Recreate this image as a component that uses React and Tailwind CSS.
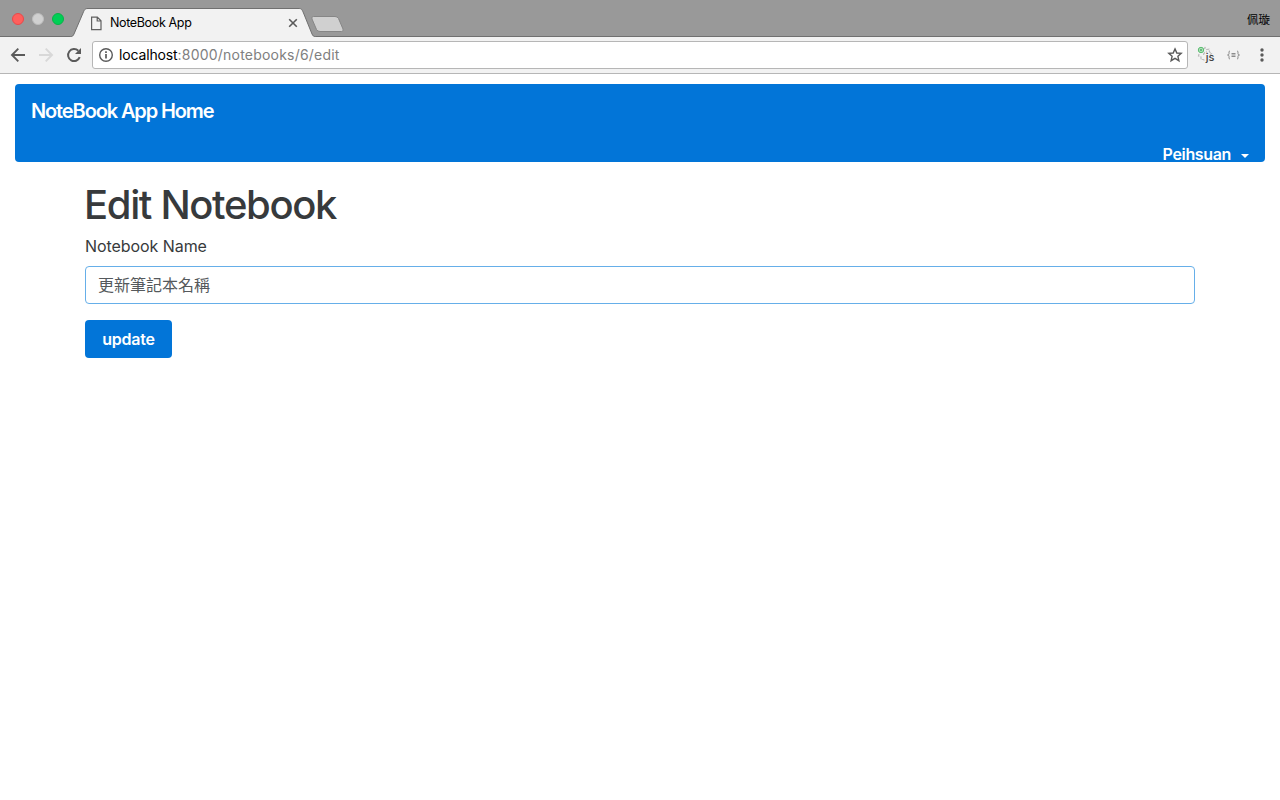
import React from "react";

function TabStrip() {
  return (
    <div className="relative flex h-[37px] items-center bg-[#999999]">
      <svg className="absolute left-0 top-0" width="1280" height="37" viewBox="0 0 1280 37" fill="none">
        <path d="M71 37 C73 36.500 73 36 74 34 L83 13 C84.500 9.500 85 8.500 88 8.500 H299 C301.500 8.500 302 9.500 303.500 13 L312 34 C313 36 313 36.500 315 37 Z" fill="#f2f2f2" />
        <path d="M0 36.500 H70.500 C72.500 36.500 73 36 74 34 L83 13 C84.500 9.500 85 8.500 88 8.500 H299 C301.500 8.500 302 9.500 303.500 13 L312 34 C313 36 313.500 36.500 315.500 36.500 H1280" stroke="#707070" />
        <path d="M313.500 16.500 H335 Q337.500 16.500 338.500 18.500 L343 29 Q344 31.500 341.500 31.500 H320 Q317.500 31.500 316.500 29.500 L312 19 Q311 16.500 313.500 16.500 Z" fill="#d0d0d0" stroke="#868686" />
      </svg>
      <div className="relative ml-3 mt-[1px] flex gap-2">
        <span className="h-3 w-3 rounded-full border border-[#e8494a] bg-[#ff5f5c]" />
        <span className="h-3 w-3 rounded-full border border-[#bdbdbd] bg-[#d0d0d0]" />
        <span className="h-3 w-3 rounded-full border border-[#09b347] bg-[#00cf56]" />
      </div>
      <svg className="relative ml-[26px] mt-[9px]" width="13" height="15" viewBox="0 0 13 15" fill="none" stroke="#606060" strokeWidth="1.200">
        <path d="M1.600 1.100 H7.300 L11 4.800 V13.600 H1.600 Z M7.200 1.100 V5 H11" />
      </svg>
      <span className="relative ml-[7px] mt-[9px] w-[178px] whitespace-nowrap text-[12.500px] leading-4 tracking-[-0.028em] text-black">
        NoteBook App
      </span>
      <svg className="relative mt-[9px]" width="10" height="10" viewBox="0 0 10 10" stroke="#5a5a5a" strokeWidth="1.600">
        <path d="M1.200 1.200 L8.800 8.800 M8.800 1.200 L1.200 8.800" />
      </svg>
      <span className="relative ml-auto mr-[10px] mt-[1px] font-['Noto_Sans_CJK_TC',sans-serif] text-[11.500px] leading-4 text-black">
        佩璇
      </span>
    </div>
  );
}

function Toolbar() {
  return (
    <div className="flex h-[37px] items-center border-b border-[#b6b6b6] bg-[#f2f2f2]">
      <svg className="ml-[10px]" width="16" height="16" viewBox="0 0 16 16" fill="none" stroke="#5a5a5a" strokeWidth="1.900">
        <path d="M15 8 H2 M8.300 1.700 L2 8 L8.300 14.300" />
      </svg>
      <svg className="ml-3" width="16" height="16" viewBox="0 0 16 16" fill="none" stroke="#d8d8d8" strokeWidth="1.900">
        <path d="M1 8 H14 M7.700 1.700 L14 8 L7.700 14.300" />
      </svg>
      <svg className="ml-3" width="16" height="16" viewBox="0 0 16 16" fill="none">
        <path d="M13.700 10.200 A6 6 0 1 1 12.300 3.800" stroke="#5a5a5a" strokeWidth="2" />
        <path d="M15 1 V7 H9 Z" fill="#5a5a5a" />
      </svg>
      <div className="ml-[10px] flex h-[28px] w-[1096px] items-center rounded-[3px] border border-[#b6b6b6] bg-white">
        <svg className="ml-[5px]" width="16" height="16" viewBox="0 0 16 16" fill="none">
          <circle cx="8" cy="8" r="6.300" stroke="#5a5a5a" strokeWidth="1.400" />
          <path d="M8 7 V11.500 M8 4.200 V5.900" stroke="#5a5a5a" strokeWidth="1.700" />
        </svg>
        <span className="ml-[5px] whitespace-nowrap text-[14px] leading-5 text-[#808080]">
          <span className="tracking-[-0.010em] text-black">localhost</span>
          <span className="tracking-[0.015em]">:8000/notebooks/6/edit</span>
        </span>
        <svg className="ml-auto mr-[4px]" width="16" height="16" viewBox="0 0 16 16" fill="none" stroke="#5a5a5a" strokeWidth="1.400">
          <path d="M8 1.900 L9.800 6 L14.200 6.400 L10.900 9.300 L11.900 13.700 L8 11.400 L4.100 13.700 L5.100 9.300 L1.800 6.400 L6.200 6 Z" />
        </svg>
      </div>
      <svg className="ml-[9px]" width="19" height="18" viewBox="0 0 19 18" fill="none">
        <path d="M7 3 L8 1.500 L9.500 3.500 L12 3.200 L12.500 6 L14.500 7.500 L13 9 M2 8 L1.500 10 L4 11 L4 13.500 L6.500 13.500 L8 15 M6.500 9 A3 3 0 0 1 10 6" stroke="#bdbdbd" strokeWidth="1.200" strokeDasharray="3 1" />
        <circle cx="4" cy="4" r="2.700" fill="#b9e3c1" stroke="#5abd70" />
        <path d="M2.800 4 H5.200 M4 2.800 V5.200" stroke="#3da657" strokeWidth=".8" />
        <text x="8.800" y="15" fontSize="11" fontWeight="500" fill="#404040" fontFamily="Inter, sans-serif">js</text>
      </svg>
      <svg className="ml-[10px]" width="15" height="12" viewBox="0 0 15 12" fill="none" stroke="#8c8c8c">
        <path d="M4 2 Q3 2 3 3 V4.700 Q3 6 1.500 6 Q3 6 3 7.300 V9 Q3 10 4 10 M11 2 Q12 2 12 3 V4.700 Q12 6 13.500 6 Q12 6 12 7.300 V9 Q12 10 11 10 M5.500 4.500 H9.500 M5.500 6 H9.500 M5.500 7.500 H9.500" />
      </svg>
      <svg className="ml-[19px]" width="4" height="14" viewBox="0 0 4 14" fill="#5a5a5a">
        <circle cx="2" cy="2" r="1.700" />
        <circle cx="2" cy="7" r="1.700" />
        <circle cx="2" cy="12" r="1.700" />
      </svg>
    </div>
  );
}

export default function App() {
  return (
    <div className="h-[800px] w-full overflow-hidden bg-white font-['Inter','Noto_Sans_CJK_TC',sans-serif] text-[#373a3c]">
      <TabStrip />
      <Toolbar />
      <nav className="mx-[15px] mt-[10px] flex h-[78px] flex-col rounded bg-[#0275d8] px-4 pt-3 text-white">
        <a className="self-start whitespace-nowrap text-[20px] font-semibold leading-[30px] tracking-[-0.056em]">NoteBook App Home</a>
        <a className="mt-4 flex items-center self-end whitespace-nowrap text-[16px] font-semibold leading-6 tracking-[-0.022em]">
          Peihsuan
          <svg className="ml-[10px] mt-[3px]" width="8" height="4" viewBox="0 0 8 4" fill="white">
            <path d="M0 0 H8 L4 4 Z" />
          </svg>
        </a>
      </nav>
      <main className="mx-[85px] mt-[21px]">
        <h1 className="-ml-px whitespace-nowrap text-[40px] font-medium leading-[44px] tracking-[-0.034em]">Edit Notebook</h1>
        <form className="mt-[7px]" onSubmit={(e) => e.preventDefault()}>
          <label className="block text-[16px] leading-6 tracking-[-0.004em]">Notebook Name</label>
          <input
            className="mt-2 block h-[38px] w-full rounded border border-[#66afe9] bg-white px-3 pb-[2px] text-[16px] leading-6 text-[#55595c] outline-none"
            defaultValue="更新筆記本名稱"
          />
          <button className="mt-4 h-[38px] w-[87px] rounded bg-[#0275d8] text-[16px] font-semibold leading-6 tracking-[-0.015em] text-white">update</button>
        </form>
      </main>
    </div>
  );
}
